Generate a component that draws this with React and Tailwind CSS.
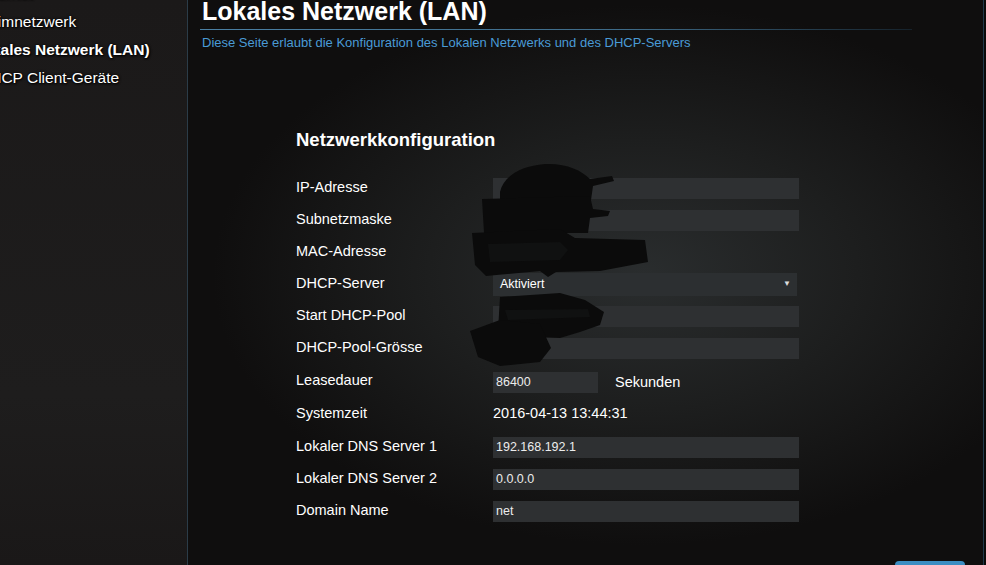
import React from 'react'

const navItems = [
  { label: 'Internet', offset: 'ml-[-20px]', bold: false },
  { label: 'Heimnetzwerk', offset: 'ml-[-22px]', bold: false },
  { label: 'Lokales Netzwerk (LAN)', offset: 'ml-[-27px]', bold: true },
  { label: 'DHCP Client-Geräte', offset: 'ml-[-21px]', bold: false },
]

const rows = [
  { label: 'IP-Adresse', kind: 'input', value: '', h: 'h-[32px]' },
  { label: 'Subnetzmaske', kind: 'input', value: '', h: 'h-[32px]' },
  { label: 'MAC-Adresse', kind: 'text', value: '', h: 'h-[32px]' },
  { label: 'DHCP-Server', kind: 'select', value: 'Aktiviert', h: 'h-[32px]' },
  { label: 'Start DHCP-Pool', kind: 'input', value: '', h: 'h-[32px]' },
  { label: 'DHCP-Pool-Grösse', kind: 'input', value: '', h: 'h-[32px]' },
  { label: 'Leasedauer', kind: 'lease', value: '86400', h: 'h-[33px]' },
  { label: 'Systemzeit', kind: 'text', value: '2016-04-13 13:44:31', h: 'h-[34px]' },
  { label: 'Lokaler DNS Server 1', kind: 'input', value: '192.168.192.1', h: 'h-[32px]' },
  { label: 'Lokaler DNS Server 2', kind: 'input', value: '0.0.0.0', h: 'h-[32px]' },
  { label: 'Domain Name', kind: 'input', value: 'net', h: 'h-[32px]' },
]

function Field({ row }) {
  if (row.kind === 'input') {
    return (
      <div className="w-[306px] h-[21px] bg-[#2e3032] pl-[3px] flex items-center text-[12.5px] text-[#ececec]">
        {row.value}
      </div>
    )
  }
  if (row.kind === 'select') {
    return (
      <div className="w-[304px] h-[23px] bg-[#2c2f31] pl-[7px] pr-[6px] flex items-center justify-between text-[12.5px] text-white">
        <span>{row.value}</span>
        <span className="text-[8px] text-[#dddddd]">▼</span>
      </div>
    )
  }
  if (row.kind === 'lease') {
    return (
      <div className="flex items-center mt-[4px]">
        <div className="w-[105px] h-[21px] bg-[#2e3032] pl-[3px] flex items-center text-[12.5px] text-[#ececec]">
          {row.value}
        </div>
        <span className="ml-[17px] text-[14.5px] text-white">Sekunden</span>
      </div>
    )
  }
  return <span className="text-[14.5px] text-white">{row.value}</span>
}

function Scribbles() {
  // black marker over the redacted addresses
  return (
    <svg className="absolute inset-0 pointer-events-none" width="986" height="565" viewBox="0 0 986 565">
      <g fill="#0b0b0b">
        <path d="M500 192 C504 176 520 166 545 164 C566 163 581 170 590 179 L612 176 L614 181 L593 186 L591 200 L500 201 Z" />
        <path d="M482 199 L590 196 L593 209 L610 211 L608 216 L590 218 L588 233 L484 233 Z" />
        <path d="M472 233 L560 229 L575 238 L645 240 L648 262 L600 271 L556 272 L548 277 L540 271 L486 276 L475 265 Z" />
        <path d="M500 297 L560 293 L585 300 L604 312 L600 325 L580 332 L560 338 L520 336 L498 330 Z" />
        <path d="M470 331 L500 320 L540 324 L551 348 L540 362 L500 366 L478 357 Z" />
      </g>
      <g fill="#101111">
        <path d="M488 244 L560 242 L568 250 L560 260 L490 262 Z" />
        <path d="M505 310 L588 309 L590 317 L508 320 Z" />
      </g>
    </svg>
  )
}

export default function App() {
  return (
    <div className="relative w-[986px] h-[565px] flex overflow-hidden bg-[#0f0e0e] font-['Liberation_Sans',Arial,sans-serif]">
      {/* ── Sidebar ── */}
      <aside className="w-[188px] shrink-0 border-r border-[#2b3c48] bg-[linear-gradient(180deg,#1b1919_0%,#1e1d1d_70%,#1a1818_100%)] overflow-hidden">
        <ul className="mt-[-20px]">
          {navItems.map(item => (
            <li
              key={item.label}
              className={`h-[28px] flex items-center whitespace-nowrap text-[15.5px] text-white [text-shadow:0_0_3px_#000,1px_1px_2px_#000] ${item.offset} ${item.bold ? 'font-bold' : ''}`}
            >
              {item.label}
            </li>
          ))}
        </ul>
      </aside>

      {/* ── Main ── */}
      <main className="w-[795px] shrink-0 overflow-hidden bg-[radial-gradient(ellipse_430px_270px_at_455px_275px,#2a2d2e_0%,#1d1e1e_50%,#0f0e0e_100%)]">
        <div className="pl-[14px]">
          <h1 className="mt-[-1px] text-[25px] leading-[25px] font-bold text-white whitespace-nowrap">
            Lokales Netzwerk (LAN)
          </h1>
          <div className="mt-[5px] ml-[-2px] w-[712px] h-px bg-[linear-gradient(90deg,#4a7fa3_0%,#3e6b88_60%,#16222b_100%)]" />
          <p className="mt-[6px] text-[13px] leading-[14px] text-[#4a9bd6] whitespace-nowrap">
            Diese Seite erlaubt die Konfiguration des Lokalen Netzwerks und des DHCP-Servers
          </p>
        </div>

        <div className="pl-[108px] mt-[79px]">
          <h2 className="text-[18.5px] leading-[22px] font-bold text-white">Netzwerkkonfiguration</h2>
          <div className="mt-[21px]">
            {rows.map(row => (
              <div key={row.label} className={`${row.h} flex items-center`}>
                <span className="w-[197px] shrink-0 text-[14.5px] text-white whitespace-nowrap">{row.label}</span>
                <Field row={row} />
              </div>
            ))}
          </div>
        </div>

        <div className="pl-[707px] mt-[34px]">
          <button className="w-[70px] h-[24px] rounded-[4px] bg-[#3b8dc2]" />
        </div>
      </main>

      <div className="w-px shrink-0 bg-[#1f3a4a]" />
      <div className="flex-1 bg-[#0a0a0a]" />

      <Scribbles />
    </div>
  )
}
